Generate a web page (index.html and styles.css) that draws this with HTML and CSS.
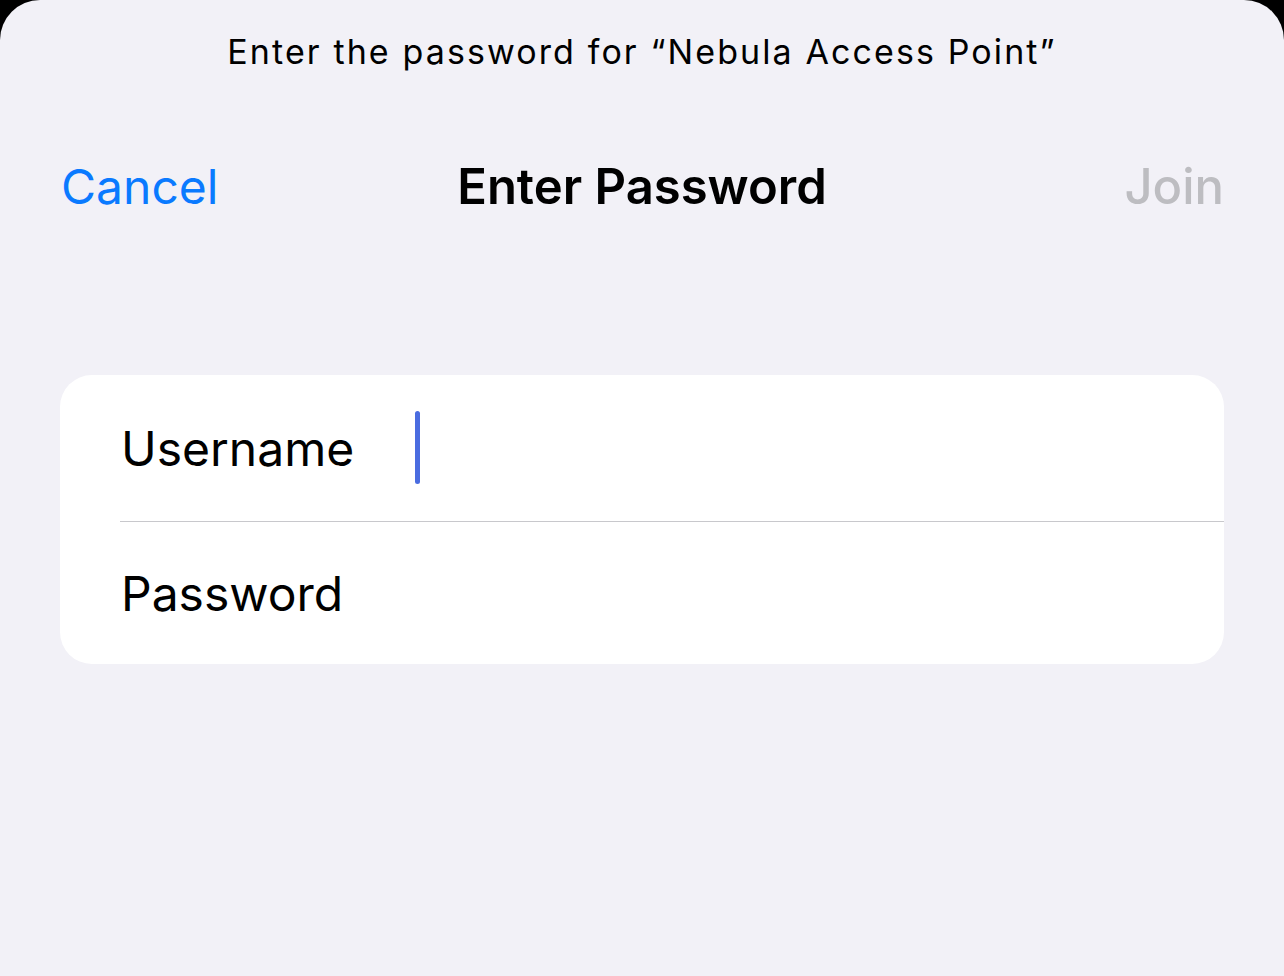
FILE: index.html
```html
<html>
<head>
<title>Enter Password</title>
<link rel="stylesheet" href="styles.css">
</head>
<body>
<div class="sheet">
  <div class="prompt">Enter the password for &ldquo;Nebula Access Point&rdquo;</div>

  <div class="navbar">
    <span class="nav-cancel">Cancel</span>
    <span class="nav-title">Enter Password</span>
    <span class="nav-join">Join</span>
  </div>

  <div class="card">
    <div class="row">
      <span class="label">Username</span>
      <span class="cursor"></span>
    </div>
    <div class="divider"></div>
    <div class="row row-last">
      <span class="label">Password</span>
    </div>
  </div>
</div>
</body>
</html>
```

FILE: styles.css
```css
html, body {
  margin: 0;
  padding: 0;
  background: #000;
}
body {
  font-family: Inter, "Liberation Sans", sans-serif;
  color: #000;
}
.sheet {
  background: #f2f1f7;
  height: 976px;
  border-radius: 40px 40px 0 0;
  overflow: hidden;
}
.prompt {
  text-align: center;
  font-size: 34px;
  letter-spacing: 2.1px;
  padding-top: 31px;
  line-height: 42px;
}
.navbar {
  display: flex;
  justify-content: space-between;
  align-items: center;
  padding: 0 60px 0 61px;
  margin-top: 85px;
  height: 56px;
  font-size: 48px;
  position: relative;
}
.nav-cancel {
  color: #0a7aff;
}
.nav-join {
  color: #bdbdc1;
  font-weight: 500;
  font-size: 49px;
}
.nav-title {
  position: absolute;
  left: 0;
  right: 0;
  text-align: center;
  font-size: 49px;
  font-weight: 600;
  pointer-events: none;
}
.card {
  background: #fff;
  margin: 161px 60px 0 60px;
  border-radius: 32px;
  overflow: hidden;
}
.row {
  height: 146px;
  display: flex;
  align-items: center;
  padding-left: 61px;
  font-size: 48px;
}
.row-last {
  height: 142px;
}
.label {
  width: 294px;
}
.cursor {
  display: inline-block;
  width: 5px;
  height: 73px;
  border-radius: 3px;
  margin-top: -2px;
  background: #4a6ce0;
}
.divider {
  height: 1px;
  background: #c8c8cc;
  margin-left: 60px;
}
```
